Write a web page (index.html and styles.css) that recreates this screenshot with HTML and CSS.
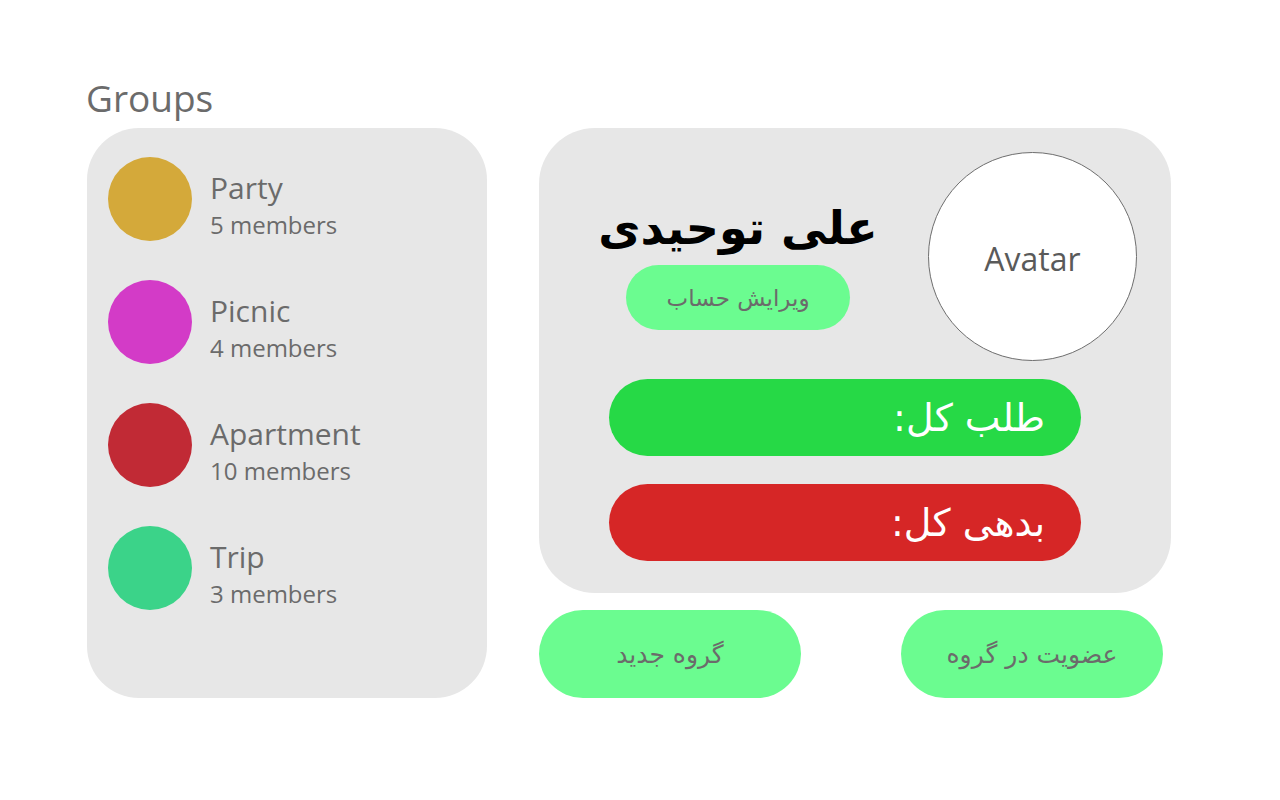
FILE: index.html
```html
<!DOCTYPE html>
<html lang="en">
<head>
<meta charset="utf-8">
<title>Groups</title>
<link rel="stylesheet" href="styles.css">
</head>
<body>
<main class="page">
  <h1 class="title">Groups</h1>
  <div class="spacer"></div>

  <section class="groups">
    <div class="group">
      <span class="dot dot-party"></span>
      <div class="group-text">
        <div class="group-name">Party</div>
        <div class="group-count">5 members</div>
      </div>
    </div>
    <div class="group">
      <span class="dot dot-picnic"></span>
      <div class="group-text">
        <div class="group-name">Picnic</div>
        <div class="group-count">4 members</div>
      </div>
    </div>
    <div class="group">
      <span class="dot dot-apartment"></span>
      <div class="group-text">
        <div class="group-name">Apartment</div>
        <div class="group-count">10 members</div>
      </div>
    </div>
    <div class="group">
      <span class="dot dot-trip"></span>
      <div class="group-text">
        <div class="group-name">Trip</div>
        <div class="group-count">3 members</div>
      </div>
    </div>
  </section>

  <div class="right-col">
    <section class="profile">
      <div class="profile-top">
        <div class="identity">
          <div class="user-name" dir="rtl">علی توحیدی</div>
          <button class="pill edit-btn" dir="rtl">ویرایش حساب</button>
        </div>
        <div class="avatar">Avatar</div>
      </div>
      <div class="bar bar-credit" dir="rtl">طلب کل:</div>
      <div class="bar bar-debt" dir="rtl">بدهی کل:</div>
    </section>
    <div class="actions">
      <button class="pill action-btn" dir="rtl">گروه جدید</button>
      <button class="pill action-btn" dir="rtl">عضویت در گروه</button>
    </div>
  </div>
</main>
</body>
</html>
```

FILE: styles.css
```css
* { box-sizing: border-box; }

html, body {
  margin: 0;
  padding: 0;
  background: #ffffff;
}

body {
  font-family: "Open Sans", "DejaVu Sans", sans-serif;
  color: #6b6b6b;
}

.page {
  display: grid;
  grid-template-columns: 400px 632px;
  grid-template-rows: 128px auto;
  column-gap: 52px;
  padding-left: 87px;
}

.title {
  grid-column: 1;
  grid-row: 1;
  align-self: end;
  margin: 0 0 8px -1px;
  font-weight: 400;
  font-size: 37px;
  line-height: 44px;
  color: #6b6b6b;
}

.spacer { grid-column: 2; grid-row: 1; }

.groups {
  grid-column: 1;
  grid-row: 2;
  height: 570px;
  background: #e7e7e7;
  border-radius: 52px;
  padding: 29px 21px;
  display: flex;
  flex-direction: column;
  gap: 39px;
}

.group {
  display: flex;
  align-items: flex-start;
  gap: 18px;
  height: 84px;
}

.dot {
  width: 84px;
  height: 84px;
  border-radius: 50%;
  flex: none;
}
.dot-party { background: #d4a93a; }
.dot-picnic { background: #d33bc7; }
.dot-apartment { background: #c12a35; }
.dot-trip { background: #3bd389; }

.group-text {
  display: flex;
  flex-direction: column;
  padding-top: 13px;
}

.group-name {
  font-size: 30px;
  line-height: 36px;
}

.group-count {
  margin-top: 4px;
  font-size: 24px;
  line-height: 30px;
}

.right-col {
  grid-column: 2;
  grid-row: 2;
  display: flex;
  flex-direction: column;
  gap: 17px;
}

.profile {
  height: 465px;
  background: #e7e7e7;
  border-radius: 56px;
  padding: 24px 34px 32px 70px;
  display: flex;
  flex-direction: column;
}

.profile-top {
  display: flex;
  justify-content: space-between;
  align-items: flex-start;
  margin-bottom: 18px;
}

.identity {
  width: 258px;
  margin-top: 46px;
  display: flex;
  flex-direction: column;
  align-items: center;
  gap: 7px;
}

.user-name {
  font-family: "DejaVu Sans", sans-serif;
  font-weight: 700;
  font-size: 46px;
  line-height: 60px;
  color: #000000;
  white-space: nowrap;
}

.pill {
  border: none;
  font-family: "DejaVu Sans", sans-serif;
  color: #6b6b6b;
  background: #6bfc90;
  cursor: pointer;
  padding: 0;
}

.edit-btn {
  width: 224px;
  height: 65px;
  border-radius: 33px;
  font-size: 23px;
}

.avatar {
  width: 209px;
  height: 209px;
  border-radius: 50%;
  background: #ffffff;
  border: 1px solid #6e6e6e;
  display: flex;
  align-items: center;
  justify-content: center;
  padding-top: 4px;
  font-size: 32px;
  color: #5a5a5a;
  flex: none;
}

.bar {
  width: 472px;
  height: 77px;
  border-radius: 39px;
  display: flex;
  align-items: center;
  padding-right: 36px;
  font-family: "DejaVu Sans", sans-serif;
  font-size: 38px;
  color: #ffffff;
}

.bar-credit { background: #26d946; margin-bottom: 28px; }
.bar-debt { background: #d62626; }

.actions {
  display: flex;
  gap: 100px;
}

.action-btn {
  width: 262px;
  height: 88px;
  border-radius: 44px;
  font-size: 25px;
}
```
